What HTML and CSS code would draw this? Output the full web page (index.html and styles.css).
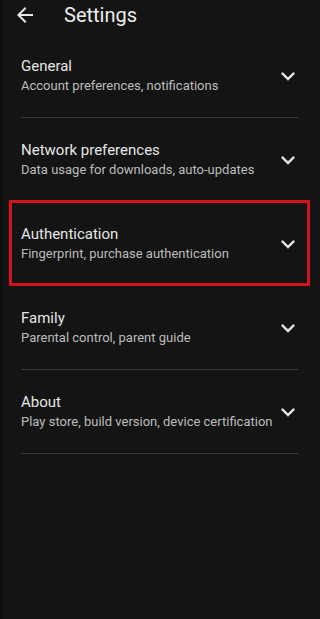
FILE: index.html
```html
<!DOCTYPE html>
<html lang="en">
<head>
  <meta charset="UTF-8">
  <meta name="viewport" content="width=device-width, initial-scale=1.0">
  <title>Settings</title>
  <link rel="stylesheet" href="styles.css">
</head>
<body>
  <!-- 顶部栏 -->
  <div class="top-bar">
    <svg class="back-icon" viewBox="0 0 24 24" width="24" height="24">
      <path d="M20 11H7.83l5.59-5.59L12 4l-8 8 8 8 1.41-1.41L7.83 13H20v-2z" fill="#e8e8e8"/>
    </svg>
    <span class="top-title">Settings</span>
  </div>

  <!-- 设置列表 -->
  <div class="settings-list">
    <div class="setting-item">
      <div class="setting-text">
        <div class="setting-title">General</div>
        <div class="setting-sub">Account preferences, notifications</div>
      </div>
      <svg class="chevron" viewBox="0 0 24 24" width="28" height="28"><path d="M16.59 8.59L12 13.17 7.41 8.59 6 10l6 6 6-6z" fill="#e0e0e0"/></svg>
    </div>
    <div class="setting-item">
      <div class="setting-text">
        <div class="setting-title">Network preferences</div>
        <div class="setting-sub">Data usage for downloads, auto-updates</div>
      </div>
      <svg class="chevron" viewBox="0 0 24 24" width="28" height="28"><path d="M16.59 8.59L12 13.17 7.41 8.59 6 10l6 6 6-6z" fill="#e0e0e0"/></svg>
    </div>
    <div class="setting-item highlighted">
      <div class="setting-text">
        <div class="setting-title">Authentication</div>
        <div class="setting-sub">Fingerprint, purchase authentication</div>
      </div>
      <svg class="chevron" viewBox="0 0 24 24" width="28" height="28"><path d="M16.59 8.59L12 13.17 7.41 8.59 6 10l6 6 6-6z" fill="#e0e0e0"/></svg>
    </div>
    <div class="setting-item">
      <div class="setting-text">
        <div class="setting-title">Family</div>
        <div class="setting-sub">Parental control, parent guide</div>
      </div>
      <svg class="chevron" viewBox="0 0 24 24" width="28" height="28"><path d="M16.59 8.59L12 13.17 7.41 8.59 6 10l6 6 6-6z" fill="#e0e0e0"/></svg>
    </div>
    <div class="setting-item">
      <div class="setting-text">
        <div class="setting-title">About</div>
        <div class="setting-sub">Play store, build version, device certification</div>
      </div>
      <svg class="chevron" viewBox="0 0 24 24" width="28" height="28"><path d="M16.59 8.59L12 13.17 7.41 8.59 6 10l6 6 6-6z" fill="#e0e0e0"/></svg>
    </div>
  </div>
</body>
</html>
```

FILE: styles.css
```css
/* 全局样式 */
* {
  margin: 0;
  padding: 0;
  box-sizing: border-box;
  font-family: Roboto, "Liberation Sans", sans-serif;
}

body {
  background-color: #141414;
  border-left: 2px solid #0c0c0c;
  min-height: 100vh;
  color: #e6e6e6;
}

/* 顶部栏 */
.top-bar {
  height: 34px;
  padding: 0 0 4px 11px;
  display: flex;
  align-items: center;
  gap: 27px;
}

.back-icon {
  display: block;
}

.top-title {
  font-size: 20px;
  color: #ececec;
}

/* 设置列表 */
.settings-list {
  margin: 0 22px 0 19px;
}

.setting-item {
  position: relative;
  display: flex;
  align-items: center;
  padding: 22px 0;
  border-bottom: 1px solid #3a3a3a;
}

.setting-text {
  flex: 1;
}

.setting-title {
  font-size: 15px;
  line-height: 20px;
  color: #e6e6e6;
}

.setting-sub {
  font-size: 13px;
  line-height: 18px;
  margin-top: 1px;
  color: #bcbcbc;
}

.chevron {
  display: block;
  margin-right: -4px;
}

/* 红框标注 */
.highlighted::after {
  content: "";
  position: absolute;
  top: -2px;
  bottom: -1px;
  left: -12px;
  right: -12px;
  border: 3px solid #d3121c;
}
```
